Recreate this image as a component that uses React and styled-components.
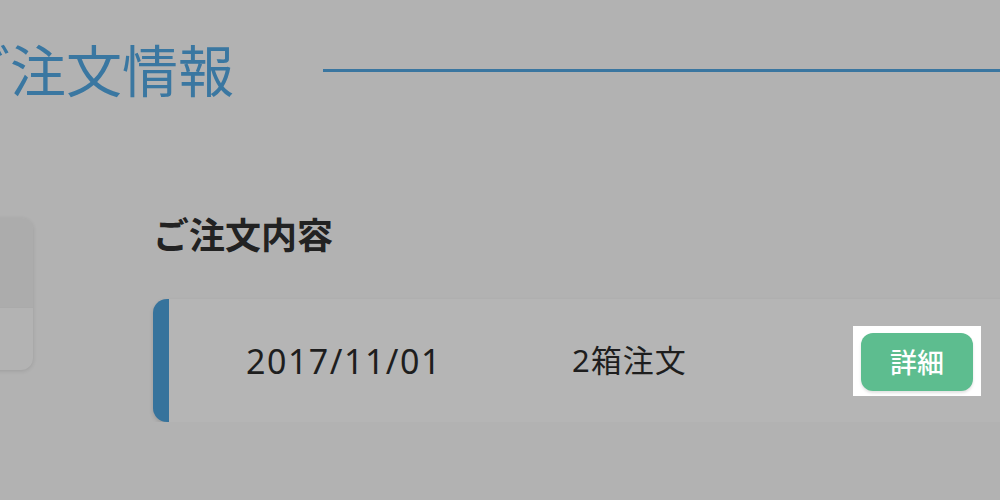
import React from "react";
import styled, { createGlobalStyle } from "styled-components";

const GlobalStyle = createGlobalStyle`
  html, body {
    margin: 0;
    padding: 0;
    background: #b2b2b2;
    overflow: hidden;
  }
  body {
    font-family: "Noto Sans", "Noto Sans CJK JP", sans-serif;
    color: #222;
  }
`;

const Page = styled.div`
  width: 1400px;
  margin-left: -167px;
`;

const Header = styled.header`
  display: flex;
  align-items: center;
  padding: 42px 0 0 121px;
`;

const Title = styled.h1`
  margin: 0;
  font-size: 56px;
  line-height: 1;
  font-weight: 400;
  color: #3a77a1;
  white-space: nowrap;
`;

const Rule = styled.div`
  flex: 1;
  height: 3px;
  margin-left: 89px;
  background: #3a76a0;
`;

const Content = styled.div`
  display: grid;
  grid-template-columns: 200px 1fr;
  column-gap: 120px;
  margin-top: 120px;
`;

const Side = styled.aside`
  height: 152px;
  border-radius: 12px;
  overflow: hidden;
  background: #b3b3b3;
  box-shadow: 0 1px 4px rgba(0, 0, 0, 0.12);
  display: flex;
  flex-direction: column;
`;

const SideTop = styled.div`
  height: 89px;
  background: #acacac;
  border-bottom: 1px solid #aaaaaa;
`;

const Main = styled.section``;

const Heading = styled.h2`
  margin: 0;
  font-size: 36px;
  line-height: 1;
  font-weight: 700;
  color: #222;
`;

const Card = styled.div`
  margin-top: 45px;
  height: 123px;
  display: flex;
  align-items: center;
  border-left: 16px solid #36739c;
  border-radius: 14px 0 0 14px;
  background: #b5b5b5;
  box-shadow: 0 2px 4px rgba(0, 0, 0, 0.14);
  padding-left: 77px;
`;

const Cell = styled.div`
  width: ${(p) => p.w}px;
  font-size: ${(p) => p.size}px;
  line-height: 1;
  letter-spacing: ${(p) => p.ls || 0}px;
  color: #1e1e1e;
  white-space: nowrap;
`;

const Spot = styled.div`
  background: #fff;
  padding: 7px 8px 5px 8px;
`;

const Button = styled.button`
  width: 112px;
  height: 58px;
  border: none;
  border-radius: 12px;
  background: #5dbd8f;
  color: #fff;
  font-family: "Noto Sans CJK JP", sans-serif;
  font-size: 27px;
  font-weight: 500;
  box-shadow: 0 2px 3px rgba(0, 0, 0, 0.12);
  display: flex;
  align-items: center;
  justify-content: center;
  padding: 0;
`;

const App = () => {
  return (
    <Page>
      <GlobalStyle />
      <Header>
        <Title>ご注文情報</Title>
        <Rule />
      </Header>
      <Content>
        <Side>
          <SideTop />
        </Side>
        <Main>
          <Heading>ご注文内容</Heading>
          <Card>
            <Cell w={326} size={34} ls={1.5}>2017/11/01</Cell>
            <Cell w={281} size={31} ls={1}>2箱注文</Cell>
            <Spot>
              <Button>詳細</Button>
            </Spot>
          </Card>
        </Main>
      </Content>
    </Page>
  );
};

export default App;
